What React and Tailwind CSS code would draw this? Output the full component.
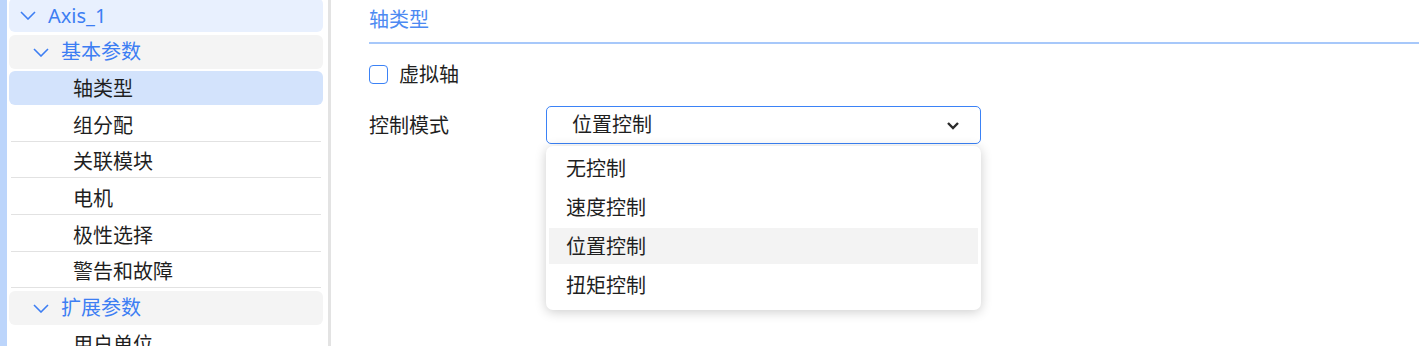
import { useState } from 'react';

const font = { fontFamily: '"Noto Sans", "Noto Sans CJK SC", sans-serif' };

const Chevron = ({ className = '' }) => (
  <svg width="16" height="9" viewBox="0 0 16 9" fill="none" className={className}>
    <polyline points="1,1 8,8 15,1" stroke="currentColor" strokeWidth="1.6" />
  </svg>
);

const navItems = [
  { label: 'Axis_1', level: 0, group: true, tone: 'root' },
  { label: '基本参数', level: 1, group: true, tone: 'group' },
  { label: '轴类型', level: 2, tone: 'active' },
  { label: '组分配', level: 2 },
  { label: '关联模块', level: 2 },
  { label: '电机', level: 2 },
  { label: '极性选择', level: 2 },
  { label: '警告和故障', level: 2 },
  { label: '扩展参数', level: 1, group: true, tone: 'group' },
  { label: '用户单位', level: 2 },
];

const toneBg = {
  root: 'bg-[#e8f0fe] rounded-[6px]',
  group: 'bg-[#f4f4f4] rounded-[6px]',
  active: 'bg-[#d3e3fc] rounded-[6px]',
};

const NavRow = ({ item }) => {
  const pad = ['pl-[11px]', 'pl-[24px]', 'pl-[64px]'][item.level];
  return (
    <div className="py-[1.3px] pl-[2px] pr-[5px]">
      <div className={`h-[34px] flex flex-col ${toneBg[item.tone] || ''}`}>
        <div className={`flex-1 flex items-center gap-[12px] ${pad} ${item.tone ? 'pt-[1px]' : 'pt-[3px]'}`}>
          {item.group && <Chevron className="text-[#3d7ef3]" />}
          <span
            className={`text-[20px] leading-none ${
              item.group ? 'text-[#3d7ef3]' : 'text-[#1f1f1f]'
            }`}
          >
            {item.label}
          </span>
        </div>
        {!item.tone && <div className="h-px mx-[2px] bg-[#e2e2e2]" />}
      </div>
    </div>
  );
};

const options = ['无控制', '速度控制', '位置控制', '扭矩控制'];

export default function App() {
  const [mode] = useState('位置控制');

  return (
    <div className="flex h-[346px] w-[1419px] overflow-hidden bg-white" style={font}>
      {/* left accent strip */}
      <div className="w-[7px] shrink-0 bg-[#bcd5fb]" />

      {/* tree */}
      <div className="w-[321px] shrink-0 mt-[-3.3px]">
        {navItems.map((item) => (
          <NavRow key={item.label} item={item} />
        ))}
      </div>

      {/* splitter */}
      <div className="w-[3px] shrink-0 bg-[#e3e3e3]" />

      {/* content */}
      <div className="flex-1 pl-[38px] pt-[6px]">
        <div className="h-[28px] flex items-center text-[20px] text-[#4d8af2]">轴类型</div>
        <div className="mt-[8px] h-[2px] bg-[#a7c8fa]" />

        <div className="mt-[16px] h-[28px] flex items-center gap-[11px]">
          <div className="w-[19px] h-[19px] rounded-[4px] border-[1.5px] border-[#3b82f6] bg-white" />
          <span className="text-[20px] text-[#1f1f1f] pt-[2px]">虚拟轴</span>
        </div>

        <div className="mt-[18px] flex items-center">
          <span className="w-[177px] text-[20px] text-[#1f1f1f] pt-[1px]">控制模式</span>
          <div className="relative">
            <div className="w-[435px] h-[38px] flex items-center justify-between pl-[25px] pr-[20px] rounded-[5px] border border-[#3b82f6] bg-white">
              <span className="text-[20px] text-[#1f1f1f]">{mode}</span>
              <svg width="14" height="9" viewBox="0 0 14 9" fill="none">
                <polyline points="2,2 7,7 12,2" stroke="#2b2b2b" strokeWidth="2.4" />
              </svg>
            </div>

            <div className="absolute left-0 top-[40px] w-[435px] rounded-[7px] bg-white px-[3px] pt-[4px] pb-[7px] flex flex-col gap-[3px] shadow-[0_2px_12px_rgba(0,0,0,0.2)]">
              {options.map((opt) => (
                <div
                  key={opt}
                  className={`h-[36px] flex items-center pl-[17px] pt-[1px] text-[20px] text-[#1f1f1f] ${
                    opt === mode ? 'bg-[#f3f3f3]' : ''
                  }`}
                >
                  {opt}
                </div>
              ))}
            </div>
          </div>
        </div>
      </div>
    </div>
  );
}
